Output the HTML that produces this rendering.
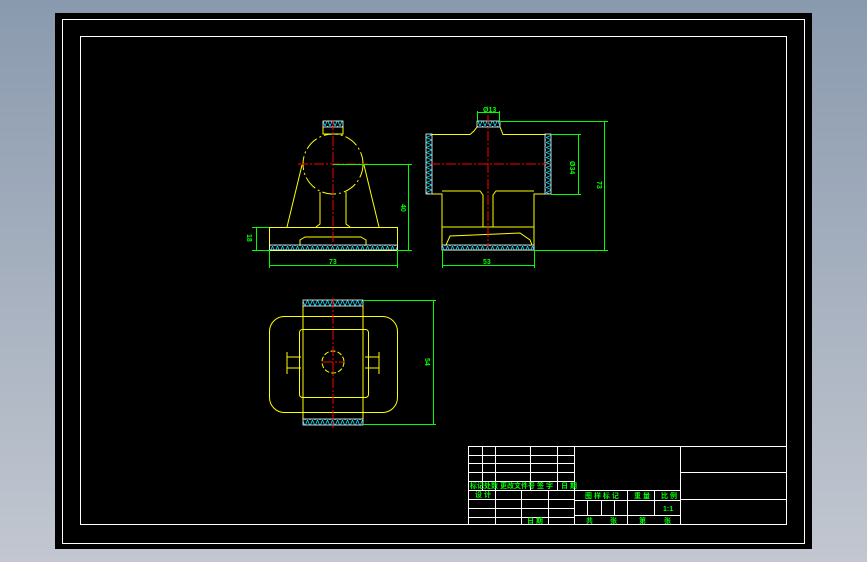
<!DOCTYPE html>
<html><head><meta charset="utf-8"><style>
html,body{margin:0;padding:0;width:867px;height:562px;overflow:hidden;background:linear-gradient(#8a9aae,#c2c7d0);}
svg{position:absolute;left:0;top:0}
text{font-family:"Liberation Sans","Noto Sans CJK SC",sans-serif;fill:#00ff00;font-size:7px;font-weight:bold}
</style></head><body>
<svg width="867" height="562" viewBox="0 0 867 562">
<defs>
<pattern id="h" width="5" height="6" patternUnits="userSpaceOnUse"><rect width="5" height="6" fill="#000"/><path d="M0 6L2.5 0L5 6" stroke="#00e5ff" stroke-width="0.8" fill="none"/></pattern>
<pattern id="hv" width="6" height="5" patternUnits="userSpaceOnUse"><rect width="6" height="5" fill="#000"/><path d="M6 0L0 2.5L6 5" stroke="#00e5ff" stroke-width="0.8" fill="none"/></pattern>
</defs>
<rect x="55" y="13" width="757" height="536" fill="#000"/>
<rect x="62.5" y="19.5" width="742" height="524" fill="none" stroke="#fff"/>
<rect x="80.5" y="36.5" width="706" height="488" fill="none" stroke="#fff"/>

<g fill="none" stroke="#ffff00" stroke-width="1">
<rect x="269.5" y="227.5" width="128" height="23"/>
<path d="M302 165 L287 227 M364 165 L379 227 M320 192 L320 224 L316 227 M346 192 L346 224 L350 227 M300 245 L300 240 L305 237 L361 237 L366 240 L366 245"/>
<circle cx="333" cy="164" r="30" stroke-dasharray="14 3 2 3"/>
<path d="M323 127 L323 134 L343 134 L343 127"/>
<path d="M432 134.5 L470 134.5 L474 131 L477 127 M500 127 L503 134.5 L545 134.5 M432 194 L442 194 L442 250 L534 250 L534 194 L545 194"/>
<path d="M442 191 L480 191 L483 195 L483 227 M534 191 L496 191 L493 195 L493 227 M442 227 L534 227 M446 245 L450 236 L520 233 L530 240 L532 245"/>
<rect x="269.5" y="316.5" width="128" height="96" rx="15"/>
<rect x="299.5" y="329.5" width="69" height="68" rx="3"/>
<path d="M303 306 L303 419 M363 306 L363 419"/>
<circle cx="333" cy="362" r="11" stroke-dasharray="5 2"/>
<path d="M287 352 L287 374 M287 357 L301 357 M287 368 L301 368 M379 352 L379 374 M365 357 L379 357 M365 368 L379 368"/>
</g>
<rect x="269.5" y="245" width="128" height="5" fill="url(#h)" stroke="#fff" stroke-width="0.8"/>
<rect x="323" y="121" width="20" height="6" fill="url(#h)" stroke="#fff" stroke-width="0.8"/>
<rect x="426" y="134" width="6" height="60" fill="url(#hv)" stroke="#fff" stroke-width="0.8"/>
<rect x="545" y="134" width="6" height="60" fill="url(#hv)" stroke="#fff" stroke-width="0.8"/>
<rect x="477" y="121" width="23" height="6" fill="url(#h)" stroke="#fff" stroke-width="0.8"/>
<rect x="442" y="245" width="92" height="5" fill="url(#h)" stroke="#fff" stroke-width="0.8"/>
<rect x="303" y="300" width="60" height="6" fill="url(#h)" stroke="#fff" stroke-width="0.8"/>
<rect x="303" y="419" width="60" height="6" fill="url(#h)" stroke="#fff" stroke-width="0.8"/>

<g stroke="#ff0000" stroke-width="1" stroke-dasharray="10 2 2 2">
<path d="M298 164 L368 164 M333 120 L333 246 M430 164 L548 164 M488 115 L488 248 M323 362 L343 362 M333 298 L333 428"/>
</g>
<g stroke="#00ff00" stroke-width="1" fill="none">
<path d="M333 164.5 L412 164.5 M408.5 164 L408.5 250 M397 250.5 L412 250.5 M256.5 227 L256.5 250 M252 227.5 L269 227.5 M252 250.5 L269 250.5 M269.5 250 L269.5 268 M397.5 250 L397.5 268 M269 265.5 L397 265.5"/>
<path d="M477.5 111 L477.5 121 M499.5 111 L499.5 121 M477 112.5 L500 112.5 M500 121.5 L608 121.5 M604.5 121 L604.5 250 M534 250.5 L608 250.5 M551 134.5 L581 134.5 M551 194.5 L581 194.5 M578.5 134 L578.5 194 M442.5 250 L442.5 268 M534.5 250 L534.5 268 M442 265.5 L534 265.5"/>
<path d="M363 300.5 L436 300.5 M363 424.5 L436 424.5 M433.5 300 L433.5 424"/>
</g>
<g font-size="7">
<text x="329" y="264">73</text><text x="483" y="264">53</text>
<text x="401" y="210" transform="rotate(90 404 207)">40</text>
<text x="246" y="241" transform="rotate(90 250 238)">18</text>
<text x="483" y="112">Ø13</text>
<text x="570" y="167" transform="rotate(90 573 164)">Ø34</text>
<text x="596" y="188" transform="rotate(90 600 185)">73</text>
<text x="424" y="365" transform="rotate(90 428 362)">54</text>
</g>

<g stroke="#fff" stroke-width="1" fill="none">
<rect x="468.5" y="446.5" width="318" height="78"/>
<path d="M574.5 446 L574.5 525 M680.5 446 L680.5 525 M680 472.5 L786 472.5 M680 499.5 L786 499.5"/>
<path d="M468 455.5 L574 455.5 M468 463.5 L574 463.5 M468 472.5 L574 472.5 M468 481.5 L574 481.5 M468 490.5 L680 490.5 M468 499.5 L574 499.5 M468 508.5 L574 508.5 M468 517.5 L574 517.5"/>
<path d="M482.5 446 L482.5 490 M495.5 446 L495.5 525 M530.5 446 L530.5 490 M557.5 446 L557.5 490 M521.5 490 L521.5 525 M548.5 490 L548.5 525"/>
<path d="M574 500.5 L680 500.5 M574 515.5 L680 515.5 M627.5 490 L627.5 525 M654.5 490 L654.5 515 M587.5 500 L587.5 515 M601.5 500 L601.5 515 M614.5 500 L614.5 515"/>
</g>
<g font-size="5">
<text x="470" y="488">标记</text><text x="484" y="488">处数</text><text x="500" y="488">更改文件号</text><text x="537" y="488">签 字</text><text x="561" y="488">日 期</text>
<text x="475" y="497">设 计</text><text x="527" y="523">日 期</text>
<text x="585" y="498">图 样 标 记</text><text x="634" y="498">重 量</text><text x="661" y="498">比 例</text>
<text x="663" y="511">1:1</text>
<text x="586" y="523">共</text><text x="610" y="523">张</text><text x="639" y="523">第</text><text x="664" y="523">张</text>
</g>
</svg>
</body></html>
